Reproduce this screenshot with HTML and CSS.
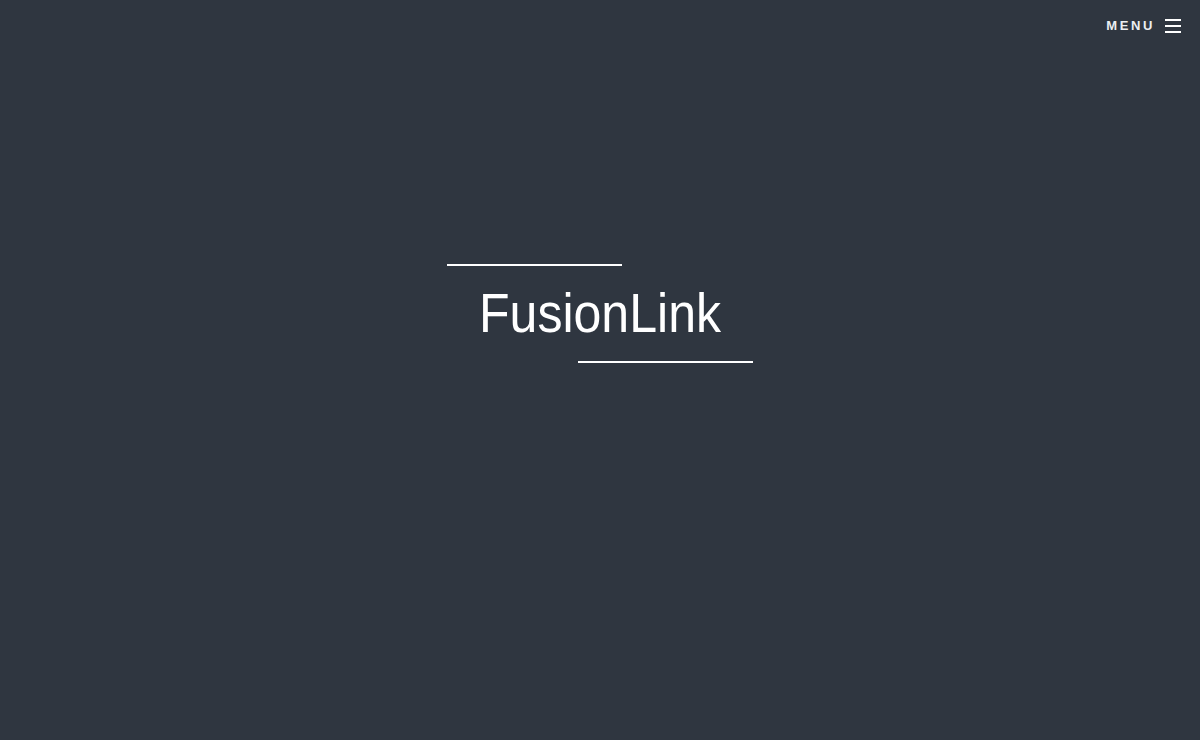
FILE: index.html
```html
<!DOCTYPE html>
<html lang="en">
<head>
<meta charset="utf-8">
<title>FusionLink</title>
<link rel="stylesheet" href="styles.css">
</head>
<body>
<header class="topbar">
  <button class="menu-btn" type="button">
    <span class="menu-label">MENU</span>
    <span class="burger"><span class="bar"></span><span class="bar"></span><span class="bar"></span></span>
  </button>
</header>
<main class="hero">
  <div class="brand">
    <span class="rule rule-top"></span>
    <h1 class="title"><span class="title-text">FusionLink</span></h1>
    <span class="rule rule-bottom"></span>
  </div>
</main>
</body>
</html>
```

FILE: styles.css
```css
html, body {
  margin: 0;
  padding: 0;
  height: 100%;
}
body {
  background: #2f3640;
  color: #ffffff;
  font-family: "Liberation Sans", Arial, sans-serif;
  overflow: hidden;
}
.topbar {
  height: 50px;
  display: flex;
  justify-content: flex-end;
  align-items: center;
  padding-right: 19px;
}
.menu-btn {
  display: flex;
  align-items: center;
  gap: 10px;
  background: none;
  border: 0;
  padding: 0;
  color: #ffffff;
  cursor: pointer;
}
.menu-label {
  font-family: "Liberation Sans", Arial, sans-serif;
  font-weight: 700;
  font-size: 13px;
  letter-spacing: 2.6px;
  line-height: 14px;
  padding-top: 1px;
  color: #eceef1;
}
.burger {
  display: flex;
  flex-direction: column;
  gap: 4px;
  width: 16px;
  padding-top: 1px;
}
.bar {
  display: block;
  height: 2px;
  background: #ffffff;
}
.hero {
  display: flex;
  justify-content: center;
  padding-top: 214px;
}
.brand {
  width: 306px;
  display: flex;
  flex-direction: column;
}
.rule {
  display: block;
  width: 175px;
  height: 2px;
  background: #ffffff;
}
.rule-top {
  align-self: flex-start;
}
.rule-bottom {
  align-self: flex-end;
}
.title {
  margin: 19px 0 20px;
  font-family: "Liberation Sans", Arial, sans-serif;
  font-weight: 400;
  font-size: 55px;
  line-height: 56px;
  text-align: center;
  color: #ffffff;
}
.title-text {
  display: inline-block;
  letter-spacing: 0;
  transform: scaleX(0.91);
  transform-origin: center;
}
```
